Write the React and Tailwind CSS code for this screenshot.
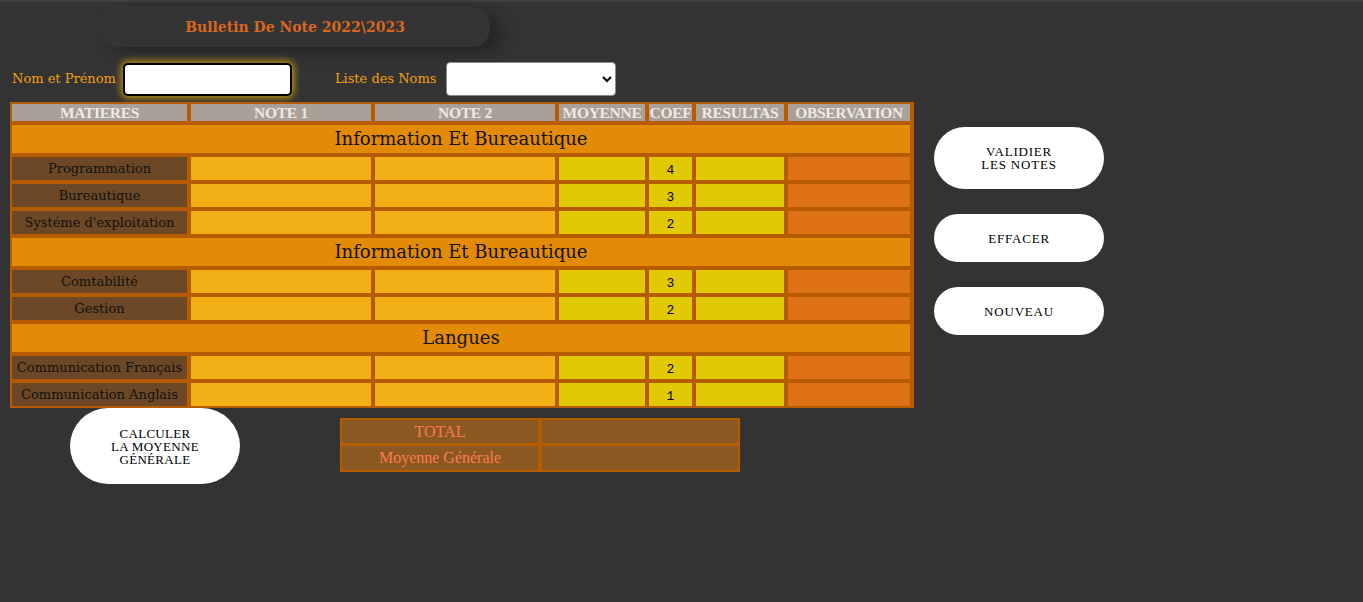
import React from "react";

const geo = { fontFamily: '"DejaVu Serif", Georgia, serif' };
const times = { fontFamily: '"Liberation Serif", "Times New Roman", serif' };

const sections = [
  {
    titre: "Information Et Bureautique",
    matieres: [
      { nom: "Programmation", coef: 4 },
      { nom: "Bureautique", coef: 3 },
      { nom: "Systéme d'exploitation", coef: 2 },
    ],
  },
  {
    titre: "Information Et Bureautique",
    matieres: [
      { nom: "Comtabilité", coef: 3 },
      { nom: "Gestion", coef: 2 },
    ],
  },
  {
    titre: "Langues",
    matieres: [
      { nom: "Communication Français", coef: 2 },
      { nom: "Communication Anglais", coef: 1 },
    ],
  },
];

const entetes = ["MATIERES", "NOTE 1", "NOTE 2", "MOYENNE", "COEF", "RESULTAS", "OBSERVATION"];

const PillButton = ({ children, className = "" }) => (
  <button
    type="button"
    className={`bg-white text-black text-[13px] leading-[13px] uppercase flex items-center justify-center text-center ${className}`}
    style={times}
  >
    {children}
  </button>
);

export default function App() {
  return (
    <div className="min-h-screen bg-[#333333] border-t-2 border-[#403f46] text-black" style={geo}>
      {/* titre */}
      <div className="ml-[100px] mt-[5px] w-[390px] h-[40px] rounded-[18px] bg-[#343434] shadow-[12px_6px_14px_rgba(0,0,0,0.25)] flex items-center justify-center">
        <h1 className="text-[14px] font-bold text-[#d8671f]">Bulletin De Note 2022\2023</h1>
      </div>

      {/* saisie */}
      <div className="flex items-center mt-[15px] ml-[12px] h-[34px]">
        <label className="text-[13px] text-[#f5a00f] mr-[7px]">Nom et Prénom</label>
        <input
          type="text"
          className="w-[169px] h-[33px] bg-white border-2 border-black rounded-[5px] shadow-[0_0_7px_2px_rgba(240,180,0,0.75)] outline-none"
        />
        <label className="text-[13px] text-[#f5a00f] ml-[43px] mr-[10px]">Liste des Noms</label>
        <select className="w-[170px] h-[34px] bg-white border border-[#8a8a8a] rounded-[4px] text-[13px]">
          <option></option>
        </select>
      </div>

      <div className="flex mt-[6px] ml-[10px]">
        {/* tableau des notes */}
        <div>
          <div className="grid grid-cols-[175px_180px_180px_86px_43px_88px_122px] gap-[4px] p-[2px] bg-[#b75b00] w-[904px]">
            {entetes.map((e) => (
              <div
                key={e}
                className="h-[17px] bg-[#a9a097] text-[#eeeae4] font-bold text-[15.5px] tracking-[-0.3px] leading-[18px] text-center whitespace-nowrap overflow-hidden"
                style={times}
              >
                {e}
              </div>
            ))}
            {sections.map((s, si) => (
              <React.Fragment key={si}>
                <div className="col-span-7 h-[28px] bg-[#e38b07] text-[18px] leading-[28px] text-center text-[#111]">
                  {s.titre}
                </div>
                {s.matieres.map((m) => (
                  <React.Fragment key={m.nom}>
                    <div className="h-[23px] bg-[#6c4826] text-[13px] leading-[23px] text-center text-[#111] whitespace-nowrap">
                      {m.nom}
                    </div>
                    <div className="h-[23px] bg-[#f2b016]" />
                    <div className="h-[23px] bg-[#f2b016]" />
                    <div className="h-[23px] bg-[#e2c905]" />
                    <div
                      className="h-[23px] bg-[#e2c905] text-[13px] leading-[27px] text-center overflow-hidden"
                      style={{ fontFamily: '"Liberation Mono", "Courier New", monospace' }}
                    >
                      {m.coef}
                    </div>
                    <div className="h-[23px] bg-[#e2c905]" />
                    <div className="h-[23px] bg-[#e07216]" />
                  </React.Fragment>
                ))}
              </React.Fragment>
            ))}
          </div>

          {/* calcul + totaux */}
          <div className="flex items-start">
            <PillButton className="ml-[60px] w-[170px] h-[76px] rounded-[38px] tracking-[0.3px]">
              Calculer
              <br />
              la moyenne
              <br />
              générale
            </PillButton>
            <div
              className="ml-[100px] mt-[10px] grid grid-cols-[196px_196px] gap-x-[4px] gap-y-[3px] p-[2px] bg-[#b75b00]"
              style={times}
            >
              <div className="h-[23px] bg-[#8a5820] text-[#fb7d4c] text-[16px] leading-[23px] text-center">TOTAL</div>
              <div className="h-[23px] bg-[#8a5820]" />
              <div className="h-[24px] bg-[#8a5820] text-[#fb7d4c] text-[16px] leading-[24px] text-center">
                Moyenne Générale
              </div>
              <div className="h-[24px] bg-[#8a5820]" />
            </div>
          </div>
        </div>

        {/* actions */}
        <div className="ml-[20px] pt-[25px] flex flex-col gap-[25px]">
          <PillButton className="w-[170px] h-[62px] rounded-[31px] tracking-[0.8px]">
            Validier
            <br />
            les notes
          </PillButton>
          <PillButton className="w-[170px] h-[48px] rounded-[24px] tracking-[0.8px]">Effacer</PillButton>
          <PillButton className="w-[170px] h-[48px] rounded-[24px] tracking-[0.8px]">Nouveau</PillButton>
        </div>
      </div>
    </div>
  );
}
